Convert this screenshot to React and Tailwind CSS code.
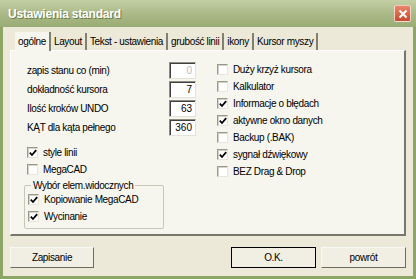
import React, { useState } from 'react';

const font = { fontFamily: '"Liberation Sans", Arial, sans-serif' };
const txt = 'text-[10px] tracking-[-0.35px] text-black whitespace-nowrap';

function Check({ checked, label, className = '' }) {
  return (
    <div className={`flex items-center h-[17px] ${className}`}>
      <span className="w-[11px] h-[11px] bg-white border border-[#9a9a8c] border-r-[#e8e6dc] border-b-[#e8e6dc] shadow-[inset_1px_1px_0_#d4d2c6] flex items-center justify-center shrink-0">
        {checked && (
          <svg width="8" height="8" viewBox="0 0 8 8">
            <path d="M0.8 3.6 L3 6 L7.2 1.2" stroke="#000" strokeWidth="1.8" fill="none" />
          </svg>
        )}
      </span>
      <span className={`ml-[5px] ${txt}`}>{label}</span>
    </div>
  );
}

function NumField({ label, value }) {
  return (
    <div className="flex items-center h-[19px]">
      <span className={`w-[142px] ${txt}`}>{label}</span>
      <span className="w-[27px] h-[17px] bg-white border border-[#8c8c80] border-r-[#e4e2d6] border-b-[#e4e2d6] shadow-[inset_1px_1px_0_#404040] text-[10px] text-right pr-[3px] leading-[15px]">
        {value}
      </span>
    </div>
  );
}

function Tab({ label, active }) {
  return (
    <div
      className={
        active
          ? `h-[19px] pl-[3px] pr-[3px] flex items-center ${txt} bg-[#f6f5ee] border-r-2 border-[#808070] -mb-px z-10 relative`
          : `h-[17px] px-[3px] flex items-center ${txt} border-r-2 border-[#808070] mt-[2px]`
      }
    >
      {label}
    </div>
  );
}

function Btn({ label, focus, className = '' }) {
  return (
    <div
      className={`h-[21px] flex items-center justify-center ${txt} bg-[#f1efe4] border ${
        focus ? 'border-black' : 'border-[#f8f8f4] border-r-[#6c6c60] border-b-[#6c6c60]'
      } ${className}`}
    >
      {label}
    </div>
  );
}

export default function App() {
  const [tab] = useState('ogólne');
  return (
    <div style={font} className="w-[416px] h-[279px] bg-[#8da565] flex flex-col overflow-hidden">
      <div className="h-[27px] flex items-center justify-between pl-[8px] pr-[5px] bg-gradient-to-b from-[#c4cfa4] via-[#abba88] to-[#99ab74]">
        <span className="text-[12px] font-bold text-white tracking-[-0.2px] [text-shadow:1px_1px_0_#6d7f4a]">
          Ustawienia standard
        </span>
        <span className="w-[17px] h-[17px] rounded-[2px] bg-gradient-to-b from-[#e8866a] to-[#c74a2c] border border-white/70 flex items-center justify-center">
          <svg width="10" height="10" viewBox="0 0 10 10">
            <path d="M1.5 1.5 L8.5 8.5 M8.5 1.5 L1.5 8.5" stroke="#fff" strokeWidth="2" />
          </svg>
        </span>
      </div>
      <div className="flex-1 mx-[3px] mb-[3px] bg-[#ece9d8] flex flex-col px-[7px] pt-[6px]">
        <div className="flex pl-[5px] h-[17px] items-end">
          {['ogólne', 'Layout', 'Tekst - ustawienia', 'grubość linii', 'ikony', 'Kursor myszy'].map((t) => (
            <Tab key={t} label={t} active={t === tab} />
          ))}
        </div>
        <div className="h-[186px] bg-[#f6f5ee] border border-white border-r-[#77776a] border-b-[#77776a] border-r-2 border-b-2 flex pt-[10px] pl-[16px]">
          <div className="w-[190px] flex flex-col">
            <NumField label="zapis stanu co (min)" value={<span className="text-[#bbb]">0</span>} />
            <NumField label="dokładność kursora" value="7" />
            <NumField label="Ilość kroków UNDO" value="63" />
            <NumField label="KĄT dla kąta pełnego" value="360" />
            <Check checked label="style linii" className="mt-[7px]" />
            <Check label="MegaCAD" />
            <div className="relative mt-[7px] -ml-[3px] w-[140px] h-[44px] border border-[#c8c6b8] rounded-[2px] pt-[5px] pl-[3px]">
              <span className={`absolute -top-[8px] left-[6px] px-[2px] bg-[#f6f5ee] ${txt}`}>
                Wybór elem.widocznych
              </span>
              <Check checked label="Kopiowanie MegaCAD" />
              <Check checked label="Wycinanie" />
            </div>
          </div>
          <div className="flex flex-col">
            <Check label="Duży krzyż kursora" />
            <Check label="Kalkulator" />
            <Check checked label="Informacje o błędach" />
            <Check checked label="aktywne okno danych" />
            <Check label="Backup (.BAK)" />
            <Check checked label="sygnał dźwiękowy" />
            <Check label="BEZ Drag & Drop" />
          </div>
        </div>
        <div className="flex mt-[11px] items-center">
          <Btn label="Zapisanie" className="w-[84px]" />
          <div className="flex-1" />
          <Btn label="O.K." focus className="w-[85px]" />
          <Btn label="powrót" className="w-[85px] ml-[5px]" />
        </div>
      </div>
    </div>
  );
}
